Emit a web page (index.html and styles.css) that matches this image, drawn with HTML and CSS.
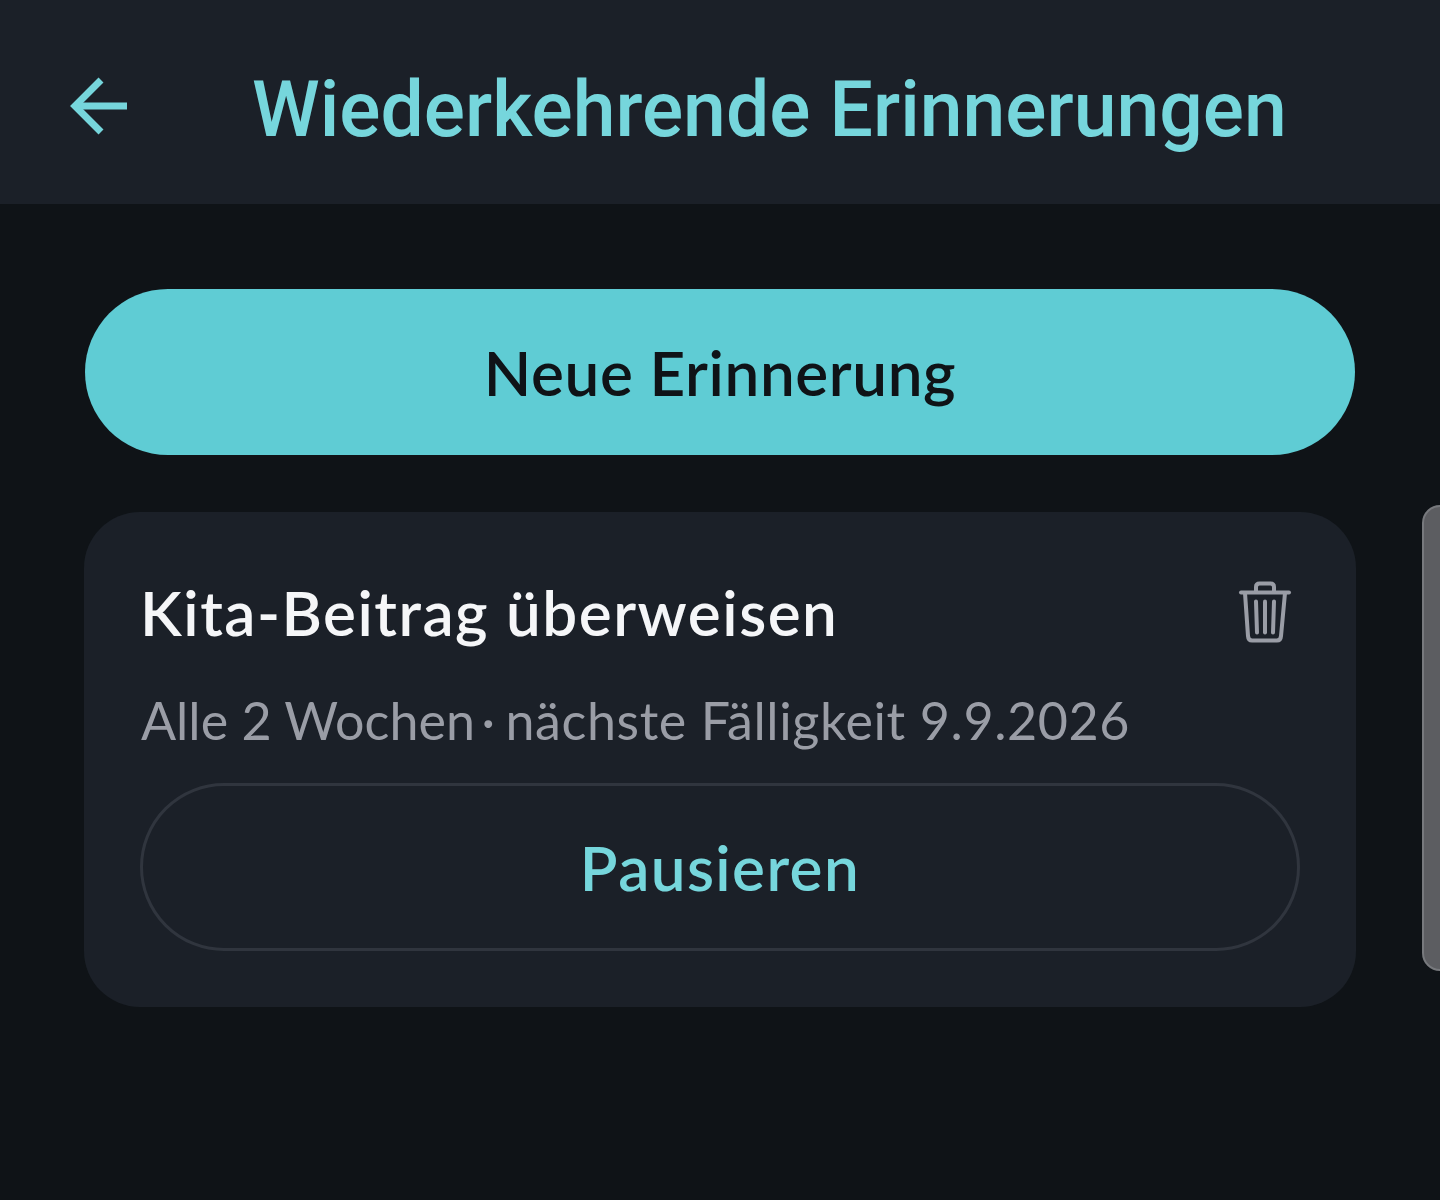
FILE: index.html
```html
<!DOCTYPE html>
<html lang="de">

<head>
    <meta charset="UTF-8">
    <title>Wiederkehrende Erinnerungen</title>
    <link rel="stylesheet" href="styles.css">
</head>

<body>
    <header class="top-bar">
        <svg class="back-icon" viewBox="0 0 58 58" fill="none" stroke="#76d6dc" stroke-width="7">
            <path d="M57 29H6" />
            <path d="M31 3L5 29L31 55" />
        </svg>
        <h1 class="page-title">Wiederkehrende Erinnerungen</h1>
    </header>

    <main class="content">
        <button class="primary-button">Neue Erinnerung</button>

        <section class="reminder-card">
            <div class="card-head">
                <h2 class="reminder-title">Kita-Beitrag überweisen</h2>
                <svg class="trash-icon" viewBox="0 0 56 64" fill="none" stroke="#9a9da6" stroke-width="4" stroke-linecap="round" stroke-linejoin="round">
                    <path d="M4 12.500H52" />
                    <path d="M19 12V7C19 4.500 20.500 3.500 22.500 3.500H33.500C35.500 3.500 37 4.500 37 7V12" />
                    <path d="M8 13L11 56C11.200 59 12.500 60.500 15 60.500H40C42.500 60.500 43.800 59 44 56L48 13" />
                    <path d="M19 21.500L20 52.500" />
                    <path d="M28 21.500V52.500" />
                    <path d="M37 21.500L36 52.500" />
                </svg>
            </div>
            <p class="reminder-meta">Alle 2 Wochen&thinsp;·&thinsp;<span class="next-due">nächste Fälligkeit 9.9.2026</span></p>
            <button class="outline-button">Pausieren</button>
        </section>
    </main>

    <div class="scroll-handle"></div>
</body>

</html>
```

FILE: styles.css
```css
body {
    margin: 0;
    height: 1200px;
    overflow: hidden;
    background-color: #0f1317;
    font-family: "Lato", sans-serif;
}

.top-bar {
    display: flex;
    align-items: center;
    height: 204px;
    padding-left: 70px;
    box-sizing: border-box;
    background-color: #1b2028;
}

.back-icon {
    width: 58px;
    height: 58px;
    margin-top: 8px;
    flex-shrink: 0;
}

.page-title {
    margin: 16px 0 0 124px;
    font-family: "Roboto", sans-serif;
    font-size: 76.900px;
    font-weight: 500;
    color: #76d6dc;
    white-space: nowrap;
}

.content {
    display: flex;
    flex-direction: column;
    gap: 57px;
    padding: 85px 84px 0;
}

.primary-button {
    height: 166px;
    margin: 0 1px;
    border: none;
    border-radius: 83px;
    background-color: #5fccd4;
    color: #0f1317;
    font-family: inherit;
    font-size: 62px;
    font-weight: 600;
    letter-spacing: 0.600px;
}

.reminder-card {
    height: 495px;
    padding: 0 56px;
    box-sizing: border-box;
    border-radius: 56px;
    background-color: #1b2028;
}

.card-head {
    display: flex;
    align-items: center;
    justify-content: space-between;
    padding: 68px 7px 0 0;
}

.reminder-title {
    margin: 0;
    font-size: 62px;
    font-weight: 600;
    line-height: 64px;
    letter-spacing: 1.500px;
    color: #f5f6f8;
}

.trash-icon {
    width: 56px;
    height: 64px;
}

.reminder-meta {
    margin: 44px 0 0;
    padding-left: 1px;
    font-size: 52px;
    font-weight: 400;
    line-height: 64px;
    color: #9a9da6;
}

.next-due {
    margin-left: 4px;
    letter-spacing: 0.600px;
}

.outline-button {
    display: block;
    width: 100%;
    height: 168px;
    margin-top: 31px;
    border: 3px solid #30353e;
    border-radius: 84px;
    background: none;
    color: #76d6dc;
    font-family: inherit;
    font-size: 62px;
    font-weight: 600;
    letter-spacing: 1.400px;
}

/* Scrollbar thumb, sits over the page edge */
.scroll-handle {
    position: absolute;
    top: 505px;
    right: -22px;
    width: 36px;
    height: 462px;
    border: 2px solid #77797d;
    border-radius: 18px;
    background-color: #5c5d61;
}
```
